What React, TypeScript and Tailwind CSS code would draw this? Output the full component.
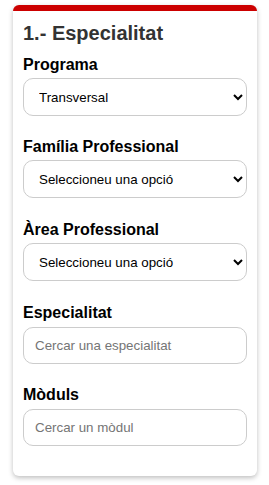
import React from "react";

const selects = [
  { label: "Programa", value: "Transversal" },
  { label: "Família Professional", value: "Seleccioneu una opció" },
  { label: "Àrea Professional", value: "Seleccioneu una opció" },
];

const searches = [
  { label: "Especialitat", placeholder: "Cercar una especialitat" },
  { label: "Mòduls", placeholder: "Cercar un mòdul" },
];

export default function App() {
  return (
    <div className="min-h-screen bg-white pt-[5px] font-['Liberation_Sans',Arial,sans-serif]">
      <div className="mx-[13px] w-[244px] rounded-md border-t-[6px] border-[#cc0000] bg-white px-[10px] pb-[30px] pt-[10px] shadow-[0_2px_5px_rgba(0,0,0,0.25)]">
        <h2 className="mb-[10px] text-[20px] font-bold leading-6 text-[#333]">1.- Especialitat</h2>

        {selects.map(({ label, value }, i) => (
          <div key={label} className={i === 0 ? "mb-[21px]" : "mb-[22px]"}>
            <label className="mb-[4px] block text-[16px] font-bold leading-[19px] text-black">{label}</label>
            <select
              defaultValue={value}
              className="h-[38px] w-full rounded-[10px] border border-[#ccc] bg-white px-[11px] text-[13.33px] text-black outline-none"
            >
              <option>{value}</option>
            </select>
          </div>
        ))}

        {searches.map(({ label, placeholder }, i) => (
          <div key={label} className={i === 0 ? "mb-[21px]" : ""}>
            <label className="mb-[5px] block text-[16px] font-bold leading-[19px] text-black">{label}</label>
            <input
              placeholder={placeholder}
              className="h-[37px] w-full rounded-[10px] border border-[#ccc] bg-white px-[11px] text-[13.33px] text-black outline-none placeholder:text-[#757575]"
            />
          </div>
        ))}
      </div>
    </div>
  );
}
